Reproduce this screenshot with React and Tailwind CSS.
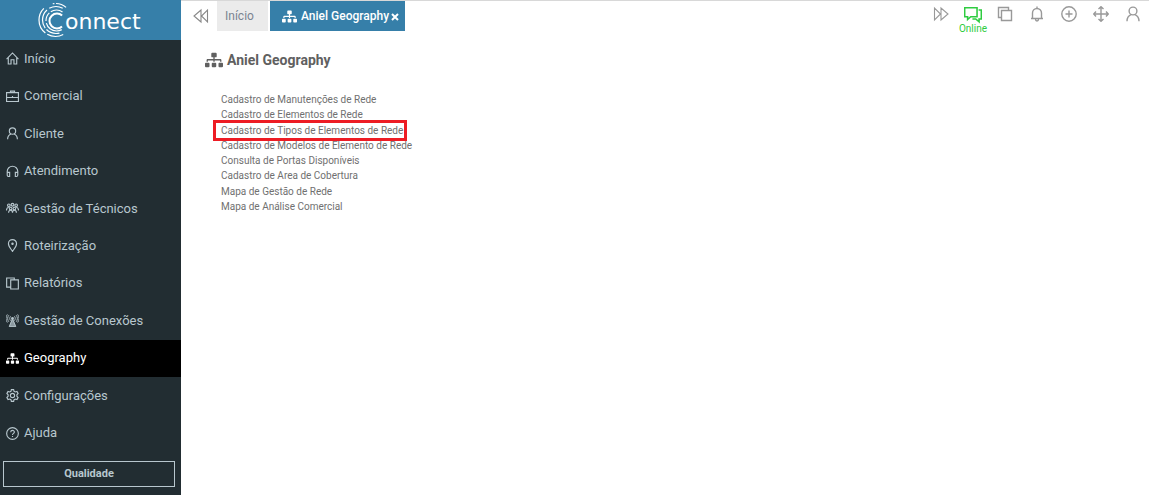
import { FaSitemap } from 'react-icons/fa';

function Line({ children, ...props }) {
  return (
    <svg viewBox="0 0 16 16" fill="none" stroke="currentColor" strokeWidth="1.4" {...props}>
      {children}
    </svg>
  );
}

const HomeIcon = (props) => (
  <Line {...props}>
    <path d="M.7 8.700L8 1.200l7.300 7.500M2.800 7v7.800h3.400V9.600h3.600v5.200h3.400V7" />
  </Line>
);

const BriefcaseIcon = (props) => (
  <Line {...props}>
    <path d="M.7 3.300h14.600v10.800H.7zM5.500 3V1.400h5V3M.7 9.200h14.600M8 7.500v1.700" />
  </Line>
);

const UserIcon = (props) => (
  <Line {...props}>
    <circle cx="8" cy="5" r="3.900" />
    <path d="M2 15.200c0-3.600 1.600-5.600 4-6.600M14 15.200c0-3.600-1.600-5.600-4-6.600" />
  </Line>
);

const HeadphoneIcon = (props) => (
  <Line {...props}>
    <path d="M1.500 12V8a6.500 6.500 0 0 1 13 0v4M4.500 9v5.200H3.300c-1 0-1.800-.8-1.800-1.800V9zM11.500 9v5.200h1.200c1 0 1.800-.8 1.800-1.800V9z" />
  </Line>
);

const PinIcon = (props) => (
  <Line {...props}>
    <path d="M8 15.300C5.500 11.500 3 8.800 3 5.700a5 5 0 0 1 10 0c0 3.100-2.500 5.800-5 9.600z" />
    <circle cx="8" cy="5.800" r=".8" fill="currentColor" />
  </Line>
);

const FilesIcon = (props) => (
  <Line {...props}>
    <path d="M5.800 3.600h9.400v11.200H5.800zM5.800 12.400H.8V1.200h9.400v2.400" />
  </Line>
);

const GearIcon = (props) => (
  <Line {...props}>
    <path d="M6.600.8h2.800l.5 2.100 1.500.8 2.100-.6 1.400 2.400-1.500 1.600v1.800l1.500 1.600-1.400 2.400-2.100-.6-1.500.8-.5 2.100H6.600l-.5-2.100-1.500-.8-2.100.6-1.400-2.400 1.500-1.600V7.100L1.100 5.500l1.400-2.400 2.100.6 1.500-.8z" />
    <circle cx="8" cy="8" r="2.600" />
  </Line>
);

const HelpIcon = (props) => (
  <Line {...props}>
    <circle cx="8" cy="8" r="7.200" />
    <path d="M5.800 6.400C5.800 3.500 10.300 3.600 10.300 6.200 10.300 7.800 8 7.900 8 9.700M8 11v1.400" />
  </Line>
);

const TeamIcon = (props) => (
  <Line {...props}>
    <circle cx="3.500" cy="4" r="1.600" />
    <circle cx="8" cy="3.400" r="1.700" />
    <circle cx="12.500" cy="4" r="1.600" />
    <circle cx="5.700" cy="8" r="1.600" />
    <circle cx="10.300" cy="8" r="1.600" />
    <path d="M.6 10.500c0-2.500 1-4 2.900-4M15.400 10.500c0-2.500-1-4-2.900-4M3.200 13.200c0-2 1-3 2.500-3s2.300 1 2.300 3c0-2 .8-3 2.300-3s2.500 1 2.500 3" />
  </Line>
);

const AntennaIcon = (props) => (
  <Line {...props}>
    <circle cx="8" cy="5.500" r="1.700" fill="currentColor" stroke="none" />
    <path d="M7.600 5.500L3.500 15.800h9L8.400 5.500z" fill="currentColor" fillOpacity=".7" stroke="none" />
    <path d="M8 6L4 15.500h8zM5.600 2.800c-1.300 1.400-1.300 4 0 5.400M3.500 1.500c-2 2.300-2 5.800 0 8.100M1.700.5c-2.300 3-2.300 7 0 10M10.400 2.800c1.300 1.400 1.300 4 0 5.400M12.500 1.500c2 2.300 2 5.800 0 8.100M14.300.5c2.300 3 2.300 7 0 10" strokeWidth="1.100" />
  </Line>
);

const ForwardIcon = (props) => (
  <Line {...props} strokeWidth="1.1">
    <path d="M1.500 2v12l6-6zM8 2v12l7-6zM7.500 8L8 7.500" />
  </Line>
);

const BackwardIcon = (props) => (
  <Line {...props} strokeWidth="1.1">
    <path d="M14.500 2v12l-6-6zM8 2v12L1 8z" />
  </Line>
);

const ChatIcon = (props) => (
  <Line {...props}>
    <path d="M.6 1.500h11v8H6L3.200 12V9.500H.6zM13 3.500h2.400v8h-2V14l-3-2.500H7.500" />
  </Line>
);

const LayersIcon = (props) => (
  <Line {...props}>
    <path d="M4.500 4.500h10v10h-10zM4.500 11.500h-3v-10h10v3" />
  </Line>
);

const BellIcon = (props) => (
  <Line {...props}>
    <path d="M8 .5v1.500M2 12.500h12M3.500 12.500V7a4.500 4.500 0 0 1 9 0v5.500M6.500 13c0 2.600 3 2.600 3 0" />
  </Line>
);

const AddIcon = (props) => (
  <Line {...props}>
    <circle cx="8" cy="8" r="7.200" />
    <path d="M8 4.500v7M4.500 8h7" />
  </Line>
);

const MoveIcon = (props) => (
  <Line {...props}>
    <path d="M8 .8v14.400M.8 8h14.400M5.500 3L8 .7 10.500 3M5.500 13L8 15.300l2.500-2.300M3 5.500L.7 8 3 10.500M13 5.500L15.300 8 13 10.500" />
  </Line>
);

function Logo() {
  return (
    <svg viewBox="0 0 106 36" className="h-9 w-[106px]" role="img" aria-label="Connect">
      <g fill="none" stroke="#fff" strokeWidth="1.200">
        <circle cx="19" cy="19" r="7.500" pathLength="360" strokeWidth="2" strokeDasharray="265 95" strokeDashoffset="-48" />
        <circle cx="18.500" cy="18.500" r="10.500" pathLength="360" strokeDasharray="0 60 105 12 50 10 68 55" />
        <circle cx="18" cy="18" r="13.500" pathLength="360" strokeDasharray="0 75 60 8 85 12 60 60" />
        <circle cx="17.500" cy="18" r="16.500" pathLength="360" strokeDasharray="0 62 58 8 97 35 6 6 38 50" />
      </g>
      <text x="27" y="27" fill="#fff" fontSize="22" fontFamily="'DejaVu Sans', sans-serif">onnect</text>
    </svg>
  );
}

const menu = [
  ['Início', HomeIcon],
  ['Comercial', BriefcaseIcon],
  ['Cliente', UserIcon],
  ['Atendimento', HeadphoneIcon],
  ['Gestão de Técnicos', TeamIcon],
  ['Roteirização', PinIcon],
  ['Relatórios', FilesIcon],
  ['Gestão de Conexões', AntennaIcon],
  ['Geography', FaSitemap],
  ['Configurações', GearIcon],
  ['Ajuda', HelpIcon],
];

const links = [
  'Cadastro de Manutenções de Rede',
  'Cadastro de Elementos de Rede',
  'Cadastro de Tipos de Elementos de Rede',
  'Cadastro de Modelos de Elemento de Rede',
  'Consulta de Portas Disponíveis',
  'Cadastro de Area de Cobertura',
  'Mapa de Gestão de Rede',
  'Mapa de Análise Comercial',
];

const tools = [
  ['Avançar', ForwardIcon],
  ['Online', ChatIcon],
  ['Janelas', LayersIcon],
  ['Notificações', BellIcon],
  ['Adicionar', AddIcon],
  ['Mover', MoveIcon],
  ['Usuário', UserIcon],
];

export default function App() {
  return (
    <div className="flex min-h-screen bg-white font-[Roboto,sans-serif]">
      <aside className="flex w-[181px] shrink-0 flex-col bg-[#222d32]">
        <div className="flex h-10 items-center justify-center bg-[#367fa9]">
          <Logo />
        </div>
        <nav className="grid min-h-[412px] auto-rows-fr">
          {menu.map(([label, Icon]) => (
            <a
              key={label}
              href="#"
              className={`flex items-center gap-[5px] pl-[6px] text-[13px] leading-5 ${label === 'Geography' ? 'bg-black text-white' : 'text-[#b8c7ce]'}`}
            >
              <Icon className="size-[13px]" aria-hidden="true" />
              {label}
            </a>
          ))}
        </nav>
        <div className="pl-[3px] pt-2 pr-[6px]">
          <button className="h-[26px] w-full border border-[#b8c7ce] text-[11px] font-bold text-[#b8c7ce]">Qualidade</button>
        </div>
      </aside>
      <main className="min-w-0 flex-1 border-t border-[#d8d8d8]">
        <header className="flex items-start">
          <button aria-label="Voltar" className="flex h-[30px] w-9 items-center justify-center pl-1 text-[#888]">
            <BackwardIcon className="size-4" />
          </button>
          <a href="#" className="flex h-[30px] w-[51px] items-center bg-[#ebebeb] pl-2 text-[12px] text-[#7b8491]">Início</a>
          <div className="ml-[2px] flex h-[30px] w-[135px] items-center bg-[#367fa9] pl-3 text-white">
            <FaSitemap className="mr-1 size-[15px]" aria-hidden="true" />
            <a href="#" className="text-[12px] font-medium">Aniel Geography</a>
            <button aria-label="Fechar" className="ml-[2px] flex h-3 items-center">
              <svg viewBox="0 0 8 8" className="mt-[2px] size-2" stroke="currentColor" strokeWidth="2">
                <path d="M1 1l6 6M7 1l-6 6" />
              </svg>
            </button>
          </div>
          <div className="ml-auto flex text-[#999]">
            {tools.map(([label, Icon]) => (
              <button
                key={label}
                aria-label={label}
                className={`flex w-8 flex-col items-center pt-[5px] ${label === 'Online' ? 'text-[#2ecc40]' : ''}`}
              >
                <Icon className={label === 'Online' ? 'size-[18px]' : 'size-4'} />
                {label === 'Online' && <span className="text-[10px] leading-[10px]">Online</span>}
              </button>
            ))}
          </div>
        </header>
        <section className="pl-6 pt-[14px]">
          <h1 className="flex items-center gap-1 text-[14px] leading-6 font-bold text-[#606060]">
            <FaSitemap className="size-[18px]" aria-hidden="true" />
            Aniel Geography
          </h1>
          <ul className="mt-5 grid min-h-[122px] auto-rows-fr justify-items-start pl-4 text-[10px] leading-[15px] text-[#707070]">
            {links.map((label) => (
              <li key={label} className="relative">
                <a href="#">{label}</a>
                {label === 'Cadastro de Tipos de Elementos de Rede' && (
                  <span className="pointer-events-none absolute -inset-y-[3px] -right-1 -left-2 border-3 border-[#ed1c24]" />
                )}
              </li>
            ))}
          </ul>
        </section>
      </main>
    </div>
  );
}
